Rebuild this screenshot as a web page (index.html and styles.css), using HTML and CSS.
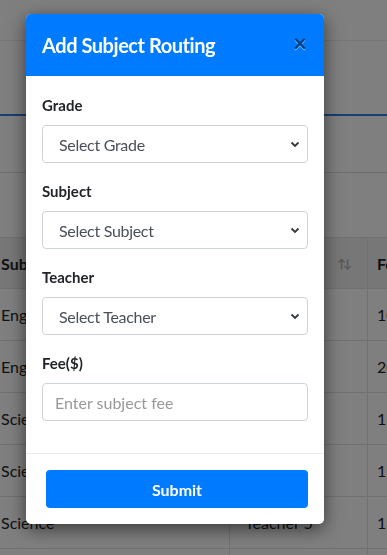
FILE: index.html
```html
<!DOCTYPE html>
<html lang="en">
<head>
<meta charset="utf-8">
<title>Add Subject Routing</title>
<link rel="stylesheet" href="styles.css">
</head>
<body>
<div class="page">
  <div class="topbar"></div>
  <div class="tabs"></div>
  <div class="section"></div>
  <div class="table">
    <div class="row head">
      <div class="cell c1">Subject</div>
      <div class="cell c2"><span></span><span class="sort">&#8593;&#8595;</span></div>
      <div class="cell c3">Fee</div>
    </div>
    <div class="row"><div class="cell c1">English</div><div class="cell c2">Teacher 1</div><div class="cell c3">100</div></div>
    <div class="row"><div class="cell c1">English</div><div class="cell c2">Teacher 2</div><div class="cell c3">200</div></div>
    <div class="row"><div class="cell c1">Science</div><div class="cell c2">Teacher 3</div><div class="cell c3">150</div></div>
    <div class="row"><div class="cell c1">Science</div><div class="cell c2">Teacher 4</div><div class="cell c3">120</div></div>
    <div class="row"><div class="cell c1">Science</div><div class="cell c2">Teacher 5</div><div class="cell c3">130</div></div>
    <div class="row"><div class="cell c1"></div><div class="cell c2"></div><div class="cell c3"></div></div>
  </div>
</div>
<div class="backdrop"></div>
<div class="modal">
  <div class="modal-header">
    <h5 class="modal-title">Add Subject Routing</h5>
    <span class="close">&times;</span>
  </div>
  <div class="modal-body">
    <div class="group">
      <label class="label">Grade</label>
      <div class="select"><span>Select Grade</span><svg width="10" height="7" viewBox="0 0 10 7"><path d="M1.5 1.5 L5 5 L8.5 1.5" fill="none" stroke="#343a40" stroke-width="1.8"/></svg></div>
    </div>
    <div class="group">
      <label class="label">Subject</label>
      <div class="select"><span>Select Subject</span><svg width="10" height="7" viewBox="0 0 10 7"><path d="M1.5 1.5 L5 5 L8.5 1.5" fill="none" stroke="#343a40" stroke-width="1.8"/></svg></div>
    </div>
    <div class="group">
      <label class="label">Teacher</label>
      <div class="select"><span>Select Teacher</span><svg width="10" height="7" viewBox="0 0 10 7"><path d="M1.5 1.5 L5 5 L8.5 1.5" fill="none" stroke="#343a40" stroke-width="1.8"/></svg></div>
    </div>
    <div class="group last">
      <label class="label">Fee($)</label>
      <input class="input" type="text" placeholder="Enter subject fee">
    </div>
  </div>
  <div class="modal-footer">
    <button class="btn">Submit</button>
  </div>
</div>
</body>
</html>
```
FILE: styles.css
```css
* { box-sizing: border-box; }
html, body { margin: 0; padding: 0; }
body {
  font-family: Lato, "Open Sans", sans-serif;
  background: #fff;
  color: #212529;
  overflow: hidden;
  width: 387px;
  height: 555px;
}
.page { width: 387px; height: 555px; overflow: hidden; }
.topbar { height: 41px; border-bottom: 1px solid #eaeaea; }
.tabs { height: 75px; border-bottom: 2px solid #2f7fe8; }
.section { height: 57px; border-bottom: 1px solid #dcdcdc; }
.table { margin-top: 64px; width: 420px; border-top: 1px solid #dee2e6; }
.row { display: grid; grid-template-columns: 230px 138px 52px; height: 52px; }
.row.head { height: 51px; background: #efefef; font-weight: 700; }
.cell {
  border-bottom: 1px solid #dee2e6;
  border-right: 1px solid #dee2e6;
  display: flex; align-items: center;
  font-size: 16px; color: #212529;
  padding: 0 10px;
}
.cell.c1 { padding-left: 1px; }
.cell.c2 { justify-content: space-between; padding-left: 15px; }
.cell.c3 { padding-left: 9px; }
.sort { color: #aaa; font-size: 12px; letter-spacing: -3px; margin-right: 8px; }
.backdrop { position: fixed; inset: 0; background: rgba(0,0,0,0.5); }
.modal {
  position: absolute; top: 14px; left: 26px; width: 298px;
  background: #fff; border-radius: 5px; overflow: hidden;
  box-shadow: 0 5px 18px rgba(0,0,0,0.55);
}
.modal-header {
  background: #007bff; color: #fff;
  display: flex; justify-content: space-between; align-items: center;
  height: 62px; padding: 0 17px 0 16px;
}
.modal-title {
  margin: 0; font-size: 20px; font-weight: 700; line-height: 30px;
  font-family: "Source Sans Pro", Lato, sans-serif; letter-spacing: -0.45px;
}
.close {
  font-size: 24px; font-weight: 700; color: #000; opacity: 0.5;
  line-height: 1; text-shadow: 0 1px 0 #fff; margin-top: -5px;
}
.modal-body { padding: 19px 16px 14px; }
.group { margin-bottom: 18px; }
.label {
  display: block; font-weight: 700; font-size: 15px; line-height: 20px;
  margin-bottom: 10px; color: #212529;
}
.select {
  height: 38px; border: 1px solid #ced4da; border-radius: 4px;
  display: flex; justify-content: space-between; align-items: center;
  padding: 0 7px 0 16px; font-size: 16px; color: #495057; letter-spacing: -0.3px;
}
.input {
  display: block; width: 100%; height: 38px;
  border: 1px solid #ced4da; border-radius: 4px;
  padding: 0 12px; font-family: Lato, sans-serif; font-size: 16px; color: #495057;
}
.input::placeholder { color: #999; }
.modal-footer {
  border-top: 1px solid #e9ecef;
  padding: 16px 16px 16px 20px;
}
.btn {
  display: block; width: 100%; height: 38px; border: 0; border-radius: 4px;
  background: #007bff; color: #fff; font-family: Lato, sans-serif;
  font-size: 16px; font-weight: 700;
}
```
